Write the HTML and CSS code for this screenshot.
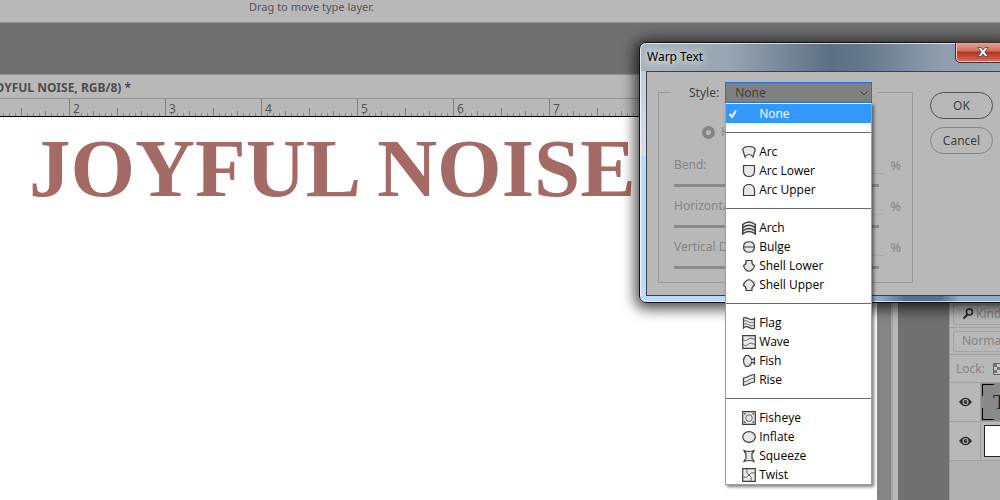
FILE: index.html
```html
<!DOCTYPE html>
<html lang="en">
<head>
    <meta charset="UTF-8">
    <meta name="viewport" content="width=device-width, initial-scale=1.0">
    <title>Warp Text</title>
    <link rel="stylesheet" href="styles.css">
</head>
<body>
    <div class="options-bar">Drag to move type layer.</div>

    <div class="workspace">
        <main class="document">
            <div class="tab"><span>JOYFUL NOISE, RGB/8) *</span></div>
            <div class="ruler">
                <span>2</span><span>3</span><span>4</span><span>5</span><span>6</span><span>7</span>
            </div>
            <div class="view">
                <div class="canvas"><h1>JOYFUL NOISE</h1></div>
                <div class="scrollbar"></div>
            </div>
        </main>

        <aside class="layers">
            <div class="layers-row">
                <div class="field">
                    <svg width="12" height="12" viewBox="0 0 12 12" fill="none" stroke="#2b2b2b"><circle cx="7.5" cy="4" r="3" stroke-width="1.6"/><path d="M5.5 6.5L1.5 10.5" stroke-width="2"/></svg>
                    <select aria-label="Filter"><option>Kind</option></select>
                </div>
            </div>
            <div class="layers-row">
                <div class="field">
                    <select aria-label="Blend mode"><option>Normal</option></select>
                </div>
            </div>
            <div class="layers-row lock">
                <span>Lock:</span>
                <svg width="12" height="12" viewBox="0 0 12 12"><path d="M.5.5h11v11H.5z" fill="#c4c4c4" stroke="#666"/><path d="M1 1h3v3H1zM7 1h3v3H7zM4 4h3v3H4zM1 7h3v3H1zM7 7h3v3H7z" fill="#777"/></svg>
            </div>
            <div class="layer">
                <button class="eye" aria-label="Toggle type layer"><svg width="13" height="10" viewBox="0 0 13 10"><path d="M0 5Q6.5-3.5 13 5Q6.5 13.5 0 5z" fill="#2b2b2b"/><circle cx="6.5" cy="5" r="3" fill="#b8b8b8"/><circle cx="6.5" cy="5" r="1.9" fill="#2b2b2b"/><circle cx="7" cy="4.5" r=".6" fill="#b8b8b8"/></svg></button>
                <div class="thumb type-thumb">T</div>
            </div>
            <div class="layer">
                <button class="eye" aria-label="Toggle background"><svg width="13" height="10" viewBox="0 0 13 10"><path d="M0 5Q6.5-3.5 13 5Q6.5 13.5 0 5z" fill="#2b2b2b"/><circle cx="6.5" cy="5" r="3" fill="#b8b8b8"/><circle cx="6.5" cy="5" r="1.9" fill="#2b2b2b"/><circle cx="7" cy="4.5" r=".6" fill="#b8b8b8"/></svg></button>
                <div class="thumb"><div class="page"></div></div>
            </div>
        </aside>
    </div>

    <div class="dialog" role="dialog" aria-labelledby="dialog-title">
        <div class="title-bar">
            <span class="dialog-title" id="dialog-title">Warp Text</span>
            <button class="close" aria-label="Close"><svg width="12" height="10" viewBox="0 0 12 10"><path d="M1 .5h3L6 3 8 .5h3L7.8 5 11 9.5H8L6 7 4 9.5H1L4.2 5z" fill="#fff" stroke="#5b3b3b" stroke-width=".8"/></svg></button>
        </div>
        <form class="dialog-body">
            <fieldset>
                <legend>
                    <label for="style">Style:</label>
                    <div class="style-picker">
                        <select id="style"><option>None</option></select>
                        <svg class="chevron" width="8" height="5" viewBox="0 0 8 5" fill="none" stroke="#444"><path d="M.5.5L4 4 7.5.5"/></svg>
                        <div class="menu">
                            <button type="button" class="active"><svg viewBox="0 0 10 10"><path d="M1.5 5L4 7.8 8 1.5"/></svg>None</button>
                            <hr>
                            <button type="button"><svg viewBox="0 0 14 14"><path d="M.7 4.5Q1.5 1.5 7 1.5T13.3 4.5L11 12Q9.500 9.500 7 9.500T3 12Z"/></svg>Arc</button>
                            <button type="button"><svg viewBox="0 0 14 14"><path d="M1.500 1.500h11V7.500Q12 12.500 7 12.500T1.500 7.500z"/></svg>Arc Lower</button>
                            <button type="button"><svg viewBox="0 0 14 14"><path d="M1.500 12.500h11V6.500Q12 1.500 7 1.500T1.500 6.500z"/></svg>Arc Upper</button>
                            <hr>
                            <button type="button"><svg viewBox="0 0 14 14"><path d="M.7 3.500Q7-1.500 13.300 3.500V13Q7 8 .7 13zM.7 6.700Q7 1.700 13.300 6.700M.7 10Q7 5 13.300 10" stroke-width="1.500"/></svg>Arch</button>
                            <button type="button"><svg viewBox="0 0 14 14"><path d="M3.500 2.500Q7 1 10.500 2.500Q12.500 4 12.500 7T10.500 11.500Q7 13 3.500 11.500Q1.500 10 1.500 7T3.500 2.500zM1.500 7h11"/></svg>Bulge</button>
                            <button type="button"><svg viewBox="0 0 14 14"><path d="M4 1.500h6Q9.300 5.500 12.500 6.500Q12 9.500 10 11Q7 13.500 4 11Q2 9.500 1.500 6.500Q4.700 5.500 4 1.500z"/></svg>Shell Lower</button>
                            <button type="button"><svg viewBox="0 0 14 14"><path d="M4 12.500h6Q9.300 8.500 12.500 7.500Q12 4.500 10 3Q7 .5 4 3Q2 4.500 1.500 7.500Q4.700 8.500 4 12.500z"/></svg>Shell Upper</button>
                            <hr>
                            <button type="button"><svg viewBox="0 0 14 14"><path d="M1.500 2C5-.5 8 6.500 12.500 2.500V12C9 15 5 7.500 1.500 12z"/><path class="thin" d="M1.500 5.500C5 2.500 8 9.500 12.500 5.500M1.500 8.500C5 5.500 8 12.500 12.500 8.500"/></svg>Flag</button>
                            <button type="button"><svg viewBox="0 0 14 14"><path d="M.7.7h12.600v12.600H.7z"/><path class="thin" d="M1 4.500C5 8 7 1.500 10 3.500L13 4.500M1 9.500C5 13 7 6.500 10 8.500L13 9.500"/></svg>Wave</button>
                            <button type="button"><svg viewBox="0 0 14 14"><path d="M4 1.500H6.500Q9 3 9.800 6Q11.500 5.500 12.500 3.500V10.500Q11.500 8.500 9.800 8Q9 11 6.500 12.500H4Q1.500 10.500 1.500 7T4 1.500z"/></svg>Fish</button>
                            <button type="button"><svg viewBox="0 0 14 14"><path d="M1.500 5C6 5 7.500 1.500 12.500 1.500V9C7.500 9 6 12.500 1.500 12.500z"/><path class="thin" d="M1.500 9C6 9 7.500 5 12.500 5"/></svg>Rise</button>
                            <hr>
                            <button type="button"><svg viewBox="0 0 14 14"><path d="M.7.7h12.600v12.600H.7z"/><circle class="thin" cx="7" cy="7" r="3.300"/><path class="thin" d="M2.500 4v-1.500H4M10 2.500h1.500V4M11.500 10v1.500H10M4 11.500H2.500V10"/></svg>Fisheye</button>
                            <button type="button"><svg viewBox="0 0 14 14"><ellipse cx="7" cy="7" rx="6.300" ry="5.300"/></svg>Inflate</button>
                            <button type="button"><svg viewBox="0 0 14 14"><path d="M2 1.500Q7 3.500 12 1.500Q11.500 3.500 10 4.500V9.500Q11.500 10.500 12 12.500Q7 10.500 2 12.500Q2.500 10.500 4 9.500V4.500Q2.500 3.500 2 1.500z"/></svg>Squeeze</button>
                            <button type="button"><svg viewBox="0 0 14 14"><path d="M.7.7h12.600v12.600H.7z"/><path class="thin" d="M7 7Q3.500 5 5 1M7 7Q9 3.500 13 5M7 7Q10.500 9 9 13M7 7Q5 10.500 1 9"/></svg>Twist</button>
                        </div>
                    </div>
                </legend>
                <div class="orientation">
                    <input type="radio" id="horizontal" name="orientation" checked disabled>
                    <label for="horizontal">Horizontal</label>
                </div>
                <div class="setting">
                    <label for="bend">Bend:</label>
                    <input type="text" id="bend" disabled>
                    <span>%</span>
                </div>
                <input type="range" class="slider" aria-label="Bend" disabled>
                <div class="setting">
                    <label for="horizontal-distortion">Horizontal Distortion:</label>
                    <input type="text" id="horizontal-distortion" disabled>
                    <span>%</span>
                </div>
                <input type="range" class="slider" aria-label="Horizontal Distortion" disabled>
                <div class="setting">
                    <label for="vertical-distortion">Vertical Distortion:</label>
                    <input type="text" id="vertical-distortion" disabled>
                    <span>%</span>
                </div>
                <input type="range" class="slider" aria-label="Vertical Distortion" disabled>
            </fieldset>
            <div class="actions">
                <button type="submit" class="primary">OK</button>
                <button type="button">Cancel</button>
            </div>
        </form>
    </div>
</body>
</html>
```
FILE: styles.css
```css
* {
    box-sizing: border-box;
}

body {
    display: flex;
    flex-direction: column;
    position: relative;
    height: 100vh;
    margin: 0;
    overflow: hidden;
    background-color: #707070;
    color: #404040;
    font-family: "Noto Sans", sans-serif;
    font-size: 12px;
    line-height: 16px;
}

button, input, select {
    margin: 0;
    padding: 0;
    border: none;
    background: none;
    color: inherit;
    font: inherit;
}

select {
    appearance: none;
}

svg {
    flex: none;
}

.options-bar {
    height: 23px;
    padding-left: 249px;
    border-bottom: 1px solid #939393;
    background-color: #b8b8b8;
    color: #555;
    font-size: 11px;
    line-height: 13px;
}

/* Document window */
.workspace {
    display: flex;
    flex: 1;
    min-height: 0;
}

.document {
    display: flex;
    flex: 1;
    flex-direction: column;
    margin: 51px 51px 0 0;
    border-top: 1px solid #939393;
}

.tab {
    height: 24px;
    border-bottom: 1px solid #939393;
    background-color: #b8b8b8;
    color: #4d4d4d;
    font-weight: bold;
    line-height: 26px;
}

.tab span {
    display: flex;
    justify-content: flex-end;
    width: 131px;
    overflow: hidden;
    white-space: nowrap;
}

.ruler {
    display: flex;
    height: 18px;
    padding-left: 69px;
    border-bottom: 1px solid #000;
    background-color: #b8b8b8;
    background-image:
        linear-gradient(90deg, #808080 1px, transparent 1px),
        linear-gradient(90deg, #808080 1px, transparent 1px),
        linear-gradient(90deg, #808080 1px, transparent 1px),
        linear-gradient(90deg, #808080 1px, transparent 1px);
    background-position: 69px 100%;
    background-repeat: repeat-x;
    background-size: 6px 3px, 24px 5px, 48px 8px, 96px 100%;
    color: #555;
    line-height: 20px;
}

.ruler span {
    width: 96px;
    padding-left: 4px;
}

.view {
    display: flex;
    flex: 1;
    background-color: #858585;
}

.canvas {
    flex: 1;
    background-color: #fff;
}

.canvas h1 {
    margin: 0;
    padding: 9px 0 0 29px;
    color: #a46a66;
    font-family: "Liberation Serif", serif;
    font-size: 83px;
    line-height: 84px;
    white-space: nowrap;
}

.scrollbar {
    width: 7px;
    margin-left: 14px;
    border-left: 2px solid #a5a5a5;
    background-color: #b8b8b8;
}

/* Layers panel */
.layers {
    width: 51px;
    margin-top: 278px;
    overflow: hidden;
    border-left: 1px solid #9c9c9c;
    background-color: #b0b0b0;
    color: #858585;
}

.layers-row {
    display: flex;
    align-items: center;
    height: 27px;
    padding-left: 3px;
    border-bottom: 1px solid #a0a0a0;
    background-color: #b8b8b8;
}

.lock {
    height: 28px;
    padding-left: 6px;
    gap: 8px;
}

.field {
    display: flex;
    flex: none;
    align-items: center;
    gap: 2px;
    width: 100px;
    height: 21px;
    padding-left: 8px;
    border: 1px solid #a3a3a3;
    border-radius: 2px;
}

.layer {
    display: flex;
    height: 39px;
    border-bottom: 1px solid #a0a0a0;
    background-color: #b8b8b8;
}

.eye {
    display: flex;
    flex: none;
    align-items: center;
    justify-content: center;
    width: 31px;
    border-right: 1px solid #a0a0a0;
}

.thumb {
    flex: none;
    width: 60px;
    padding: 3px;
}

.page {
    width: 44px;
    height: 32px;
    border: 1px solid #222;
    background-color: #fff;
}

.type-thumb {
    padding: 4px 0 0 12px;
    background:
        linear-gradient(#000, #000) 1px 1px / 12px 1px no-repeat,
        linear-gradient(#000, #000) 1px 1px / 1px 12px no-repeat,
        linear-gradient(#000, #000) 1px 36px / 12px 1px no-repeat,
        linear-gradient(#000, #000) 1px 25px / 1px 12px no-repeat,
        #8a8a8a;
    color: #222;
    font-family: "Liberation Serif", serif;
    font-size: 22px;
    line-height: 30px;
}

/* Warp Text dialog */
.dialog {
    position: absolute;
    top: 42px;
    left: 639px;
    width: 377px;
    padding: 0 6px 6px;
    border: 1px solid #111;
    border-radius: 7px;
    background:
        linear-gradient(90deg, #b9dbff 85px, #57708f 100px, #8ea9cc 170px, #8ea9cc 240px, #57708f 265px, #57708f 300px, #8ea9cc 320px) 0 100% / 100% 7px no-repeat,
        linear-gradient(#c0ccd7, #d5dfe8 84px, #b9dbff 85px) 0 28px / 7px 100% no-repeat,
        linear-gradient(90deg, #a9b3bd, #97a4b1 90px, #5d6f84 190px, #64768b 220px, #8f9dac 300px, #9aa7b4);
    box-shadow: inset 0 0 0 1px rgba(255, 255, 255, 0.7), 0 2px 14px 4px rgba(0, 0, 0, 0.7);
}

.title-bar {
    display: flex;
    justify-content: space-between;
    height: 28px;
    color: #000;
}

.dialog-title {
    padding-left: 1px;
    line-height: 28px;
    text-shadow: 0 0 8px #fff, 0 0 12px #fff;
}

.close {
    display: flex;
    align-items: center;
    justify-content: center;
    width: 53px;
    height: 19px;
    border: 1px solid #efc9c2;
    border-top: none;
    border-radius: 0 0 4px 4px;
    outline: 1px solid #4b2a2a;
    background: linear-gradient(#e0a198, #cf6d5f 45%, #b5331c 50%, #d4695a);
}

.dialog-body {
    display: flex;
    align-items: flex-start;
    gap: 17px;
    height: 225px;
    padding: 10px 0 0 11px;
    border: 1px solid #3c4148;
    background-color: #b8b8b8;
}

fieldset {
    flex: none;
    width: 255px;
    height: 201px;
    min-width: 0;
    margin: 0;
    padding: 0 11px 0 15px;
    border: 1px solid #9a9a9a;
    color: #858585;
}

legend {
    display: flex;
    align-items: center;
    gap: 6px;
    margin-left: -3px;
    padding: 0 6px 0 18px;
    color: #404040;
}

.style-picker {
    position: relative;
}

.style-picker select {
    display: block;
    width: 147px;
    height: 21px;
    padding: 0 9px;
    border: 1px solid #1f72dc;
    background-color: #808080;
}

.chevron {
    position: absolute;
    top: 9px;
    right: 4px;
}

.menu {
    position: absolute;
    z-index: 1;
    top: 100%;
    left: 0;
    width: 147px;
    padding-top: 1px;
    border: 1px solid #9a9ea5;
    border-top: none;
    background-color: #fff;
    box-shadow: 2px 2px 3px rgba(0, 0, 0, 0.5);
    font-family: "Open Sans", "Noto Sans", sans-serif;
}

.menu button {
    display: flex;
    align-items: center;
    gap: 3px;
    width: 100%;
    height: 19px;
    padding-left: 16px;
    color: #000;
}

.menu button svg {
    width: 14px;
    height: 14px;
    fill: #e8e8e8;
    stroke: #3c3c3c;
    stroke-width: 1.2;
}

.menu .thin {
    fill: none;
    stroke: #666;
    stroke-width: 1;
}

.menu .active {
    gap: 21px;
    padding-left: 2px;
    background-color: #3399ff;
    color: #fff;
}

.menu .active svg {
    width: 10px;
    height: 10px;
    fill: none;
    stroke: #fff;
    stroke-width: 2;
}

.menu hr {
    height: 19px;
    margin: 0;
    border: none;
    background: linear-gradient(#6a6a6e, #6a6a6e) 0 9px / 100% 1px no-repeat;
}

.orientation {
    display: flex;
    align-items: center;
    gap: 6px;
    padding: 21px 0 17px 28px;
}

.orientation input {
    width: 13px;
    height: 13px;
    appearance: none;
    border: 4px solid #858585;
    border-radius: 50%;
}

.setting {
    display: flex;
    align-items: center;
    justify-content: space-between;
    height: 16px;
    white-space: nowrap;
}

.setting input {
    flex: none;
    width: 50px;
    height: 18px;
    margin: 0 6px 0 auto;
    border-bottom: 1px solid #a8a8a8;
}

.setting label {
    width: 140px;
}

.setting span {
    font-size: 13px;
}

.slider {
    display: block;
    width: 205px;
    height: 3px;
    margin: 11px 0;
    appearance: none;
    background-color: #8a8a8a;
}

.slider::-webkit-slider-thumb {
    appearance: none;
    width: 0;
    height: 0;
}

.actions {
    display: flex;
    flex-direction: column;
    gap: 8px;
    padding-top: 10px;
}

.actions button {
    width: 63px;
    height: 27px;
    border: 1px solid #858585;
    border-radius: 14px;
}

.actions .primary {
    border-color: #505050;
}
```
